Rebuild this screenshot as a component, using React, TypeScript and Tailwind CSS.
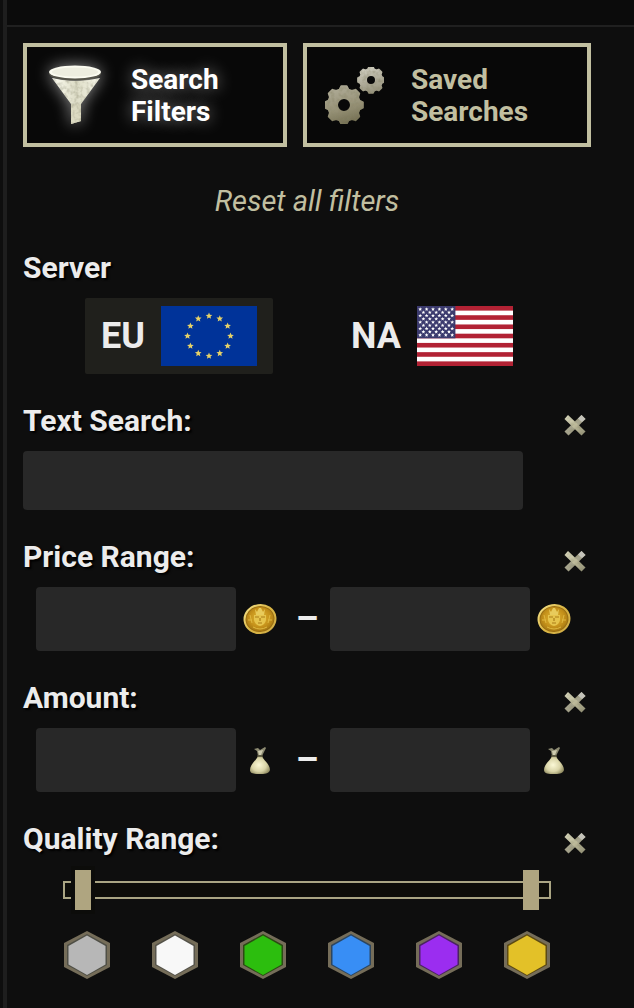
import { useState } from "react"
import type { ReactNode } from "react"

interface SectionProps {
  title: string
  htmlFor?: string
  onClear?: () => void
  children: ReactNode
}

interface RangeRowProps {
  name: string
  min: string
  max: string
  onMin: (value: string) => void
  onMax: (value: string) => void
  icon: ReactNode
}

const qualities = [
  { name: "Poor", color: "#b7b7b7", shade: "#4f4f46" },
  { name: "Common", color: "#f8f8f8", shade: "#55534a" },
  { name: "Uncommon", color: "#2cbe0e", shade: "#2c4a14" },
  { name: "Rare", color: "#388ef5", shade: "#2c4660" },
  { name: "Epic", color: "#9b2df0", shade: "#4a2460" },
  { name: "Legendary", color: "#e3c128", shade: "#5c4a14" },
]

const polar = (cx: number, cy: number, r: number, deg: number) => {
  const a = ((deg - 90) * Math.PI) / 180
  return `${(cx + r * Math.cos(a)).toFixed(2)} ${(cy + r * Math.sin(a)).toFixed(2)}`
}

const gearPath = (cx: number, cy: number, outer: number, inner: number, hole: number) => {
  const points: string[] = []
  for (let i = 0; i < 8; i++) {
    const a = i * 45
    points.push(polar(cx, cy, inner, a - 16), polar(cx, cy, outer, a - 8))
    points.push(polar(cx, cy, outer, a + 8), polar(cx, cy, inner, a + 16))
  }
  return `M${points.join("L")}ZM${cx - hole} ${cy}a${hole} ${hole} 0 1 0 ${hole * 2} 0a${hole} ${hole} 0 1 0 ${-hole * 2} 0Z`
}

const starPoints = (cx: number, cy: number, r: number) =>
  Array.from({ length: 10 }, (_, i) => polar(cx, cy, i % 2 ? r * 0.45 : r, i * 36)).join(" ")

// shared gradients and the worn stone surface used by the icons
const IconDefs = () => (
  <svg className="absolute h-0 w-0" aria-hidden="true">
    <defs>
      <linearGradient id="stone" x1="0" y1="0" x2="1" y2="1">
        <stop offset="0" stopColor="#dddcc2" />
        <stop offset="0.5" stopColor="#bdba9a" />
        <stop offset="1" stopColor="#8d8b72" />
      </linearGradient>
      <linearGradient id="gear" x1="0.3" y1="0" x2="0.6" y2="1">
        <stop offset="0" stopColor="#b0ac98" />
        <stop offset="0.6" stopColor="#969176" />
        <stop offset="1" stopColor="#736e52" />
      </linearGradient>
      <linearGradient id="gear-light" x1="0.3" y1="0" x2="0.6" y2="1">
        <stop offset="0" stopColor="#cfcdbf" />
        <stop offset="1" stopColor="#96927c" />
      </linearGradient>
      <linearGradient id="cone" x1="0" y1="0" x2="1" y2="0">
        <stop offset="0" stopColor="#fffff4" />
        <stop offset="0.5" stopColor="#dddcc6" />
        <stop offset="1" stopColor="#f8f8ea" />
      </linearGradient>
      <radialGradient id="coin" cx="0.5" cy="0.45" r="0.55">
        <stop offset="0" stopColor="#e2b834" />
        <stop offset="0.7" stopColor="#c4901a" />
        <stop offset="1" stopColor="#a87a14" />
      </radialGradient>
      <linearGradient id="rim" x1="0" y1="0" x2="1" y2="1">
        <stop offset="0" stopColor="#f7e690" />
        <stop offset="0.5" stopColor="#dab644" />
        <stop offset="1" stopColor="#d0ac48" />
      </linearGradient>
      <radialGradient id="sack" cx="0.45" cy="0.5" r="0.6">
        <stop offset="0" stopColor="#fbf8d6" />
        <stop offset="0.6" stopColor="#dad5a8" />
        <stop offset="1" stopColor="#8f8a60" />
      </radialGradient>
      <filter id="worn" x="0" y="0" width="1" height="1">
        <feTurbulence type="fractalNoise" baseFrequency="0.25" numOctaves="2" seed="4" />
        <feColorMatrix values="0 0 0 0 0.25  0 0 0 0 0.24  0 0 0 0 0.14  1.2 0 0 0 -0.5" />
        <feComposite in2="SourceAlpha" operator="in" result="spots" />
        <feMerge>
          <feMergeNode in="SourceGraphic" />
          <feMergeNode in="spots" />
        </feMerge>
      </filter>
    </defs>
  </svg>
)

const FunnelIcon = () => (
  <svg viewBox="0 0 64 64" className="h-16 w-16 shrink-0 drop-shadow-[0_0_8px_rgba(255,255,255,0.55)]" aria-hidden="true">
    <g filter="url(#worn)">
      <path d="M9 15Q32 21 57 15L38 41V58L28 61V41Z" fill="url(#cone)" />
      <path d="M28 41H38V58L28 61Z" fill="#dcdac2" />
    </g>
    <ellipse cx="32" cy="10.500" rx="26" ry="7" fill="#55544a" />
    <ellipse cx="32" cy="9" rx="26" ry="6.500" fill="#fbfbf0" />
    <ellipse cx="32" cy="9" rx="23" ry="4.500" fill="#eeeee0" />
  </svg>
)

const GearsIcon = () => (
  <svg viewBox="0 0 64 64" className="h-16 w-16 shrink-0" aria-hidden="true">
    <g filter="url(#worn)" fillRule="evenodd" strokeWidth="2" strokeLinejoin="round">
      <path d={gearPath(21, 42, 19, 16, 7)} fill="url(#gear)" stroke="url(#gear)" />
      <path d={gearPath(48, 17, 13, 11, 5)} fill="url(#gear-light)" stroke="url(#gear-light)" />
    </g>
  </svg>
)

const CrossIcon = () => (
  <svg viewBox="0 0 24 24" className="h-6 w-6" aria-hidden="true">
    <g filter="url(#worn)">
      <path d="M18.500 2L22.500 6L5.500 22.500L1.500 18.500Z" fill="#a5a38c" />
      <path d="M5 2L22.500 18.500L18.500 22.500L1.500 6Z" fill="url(#stone)" />
    </g>
    <path d="M18.500 2L22.500 6L19 9L15 5.500Z" fill="#c4c3ba" />
  </svg>
)

const CoinIcon = () => (
  <svg viewBox="0 0 34 32" className="h-8 w-9" aria-hidden="true">
    <g transform="rotate(-8 17 16)">
      <ellipse cx="17" cy="16" rx="16.500" ry="15" fill="url(#rim)" />
      <ellipse cx="17" cy="16" rx="14.500" ry="13" fill="#9a6e12" />
      <ellipse cx="17" cy="16" rx="13.500" ry="12" fill="url(#coin)" />
    </g>
    <path d="M12 6L13 12H21L22 6L20 9L18 5H16L14 9Z" fill="#e8cb5c" />
    <path d="M11 12H23V17Q22 22 17 23Q12 22 11 17Z" fill="#e6c44c" />
    <path d="M12 14H16M18 14H22M15 20H19M17 15V18" stroke="#a97c18" strokeWidth="1.200" />
    <path d="M7 12L9 20M27 12L25 20M5 17H9M25 17H29M10 24Q17 28 24 24" stroke="#dfb840" strokeWidth="1" fill="none" />
  </svg>
)

const SackIcon = () => (
  <svg viewBox="0 0 32 32" className="h-8 w-8" aria-hidden="true">
    <path d="M10 5L14 4L16 6L21 3L22 4L18 12H14L13 7Z" fill="#8d8b72" />
    <path d="M14 7L15 11H17L19 6" fill="#cfccb0" />
    <path d="M14 12H18C20 17 26 20 26 26C25 30 20 30 16 30C11 30 6 30 6 26C6 20 12 17 14 12Z" fill="url(#sack)" />
    <path d="M13 12H19" stroke="#4d4a34" strokeWidth="1.500" />
  </svg>
)

const EuFlag = () => (
  <svg viewBox="0 0 96 60" className="h-[60px] w-24" aria-hidden="true">
    <rect width="96" height="60" fill="#003399" />
    {Array.from({ length: 12 }, (_, i) => {
      const a = (i * Math.PI) / 6
      return <polygon key={i} points={starPoints(48 + 21.5 * Math.sin(a), 30 - 20 * Math.cos(a), 3.5)} fill="#e6d268" />
    })}
  </svg>
)

const UsFlag = () => (
  <svg viewBox="0 0 96 60" className="h-[60px] w-24" aria-hidden="true">
    <rect width="96" height="60" fill="#fff" />
    {Array.from({ length: 7 }, (_, i) => (
      <rect key={i} y={(i * 120) / 13} width="96" height={60 / 13} fill="#b22234" />
    ))}
    <rect width="38.400" height="32.300" fill="#3c3b6e" />
    {Array.from({ length: 9 }, (_, row) =>
      Array.from({ length: row % 2 ? 5 : 6 }, (_, col) => (
        <polygon
          key={`${row}-${col}`}
          points={starPoints((row % 2 ? 6.4 : 3.2) + col * 6.4, 3.23 + row * 3.23, 2)}
          fill="#fff"
        />
      ))
    )}
  </svg>
)

const Section = ({ title, htmlFor, onClear, children }: SectionProps) => (
  <section className="mb-[31px]">
    <div className="mb-3.5 flex items-end justify-between">
      <h2 className="text-[30px] leading-8 font-bold [text-shadow:2px_2px_2px_#000]">
        {htmlFor ? <label htmlFor={htmlFor}>{title}</label> : title}
      </h2>
      {onClear && (
        <button
          type="button"
          onClick={onClear}
          aria-label={`Clear ${title}`}
          className="flex w-8 cursor-pointer justify-center hover:brightness-125"
        >
          <CrossIcon />
        </button>
      )}
    </div>
    {children}
  </section>
)

const RangeRow = ({ name, min, max, onMin, onMax, icon }: RangeRowProps) => (
  <div className="flex items-center justify-center">
    <input
      aria-label={`${name} from`}
      value={min}
      onChange={e => onMin(e.target.value)}
      className="h-16 w-full max-w-[200px] min-w-0 rounded bg-[#282828] px-4 text-[28px] outline-none"
    />
    <span className="flex w-12 shrink-0 justify-center">{icon}</span>
    <span className="w-[46px] shrink-0 text-center text-4xl font-bold">–</span>
    <input
      aria-label={`${name} to`}
      value={max}
      onChange={e => onMax(e.target.value)}
      className="h-16 w-full max-w-[200px] min-w-0 rounded bg-[#282828] px-4 text-[28px] outline-none"
    />
    <span className="flex w-12 shrink-0 justify-center">{icon}</span>
  </div>
)

const tabClass =
  "flex h-[104px] cursor-pointer items-center gap-6 border-4 border-[#c1bfa0] bg-[#080808] pl-4 text-left text-[28px] leading-8 font-bold"

const serverClass = "flex cursor-pointer items-center gap-4 rounded-xs px-4 py-2 text-4xl font-bold"

const thumbClass =
  "pointer-events-none col-start-1 row-start-1 mx-3 h-10 appearance-none bg-transparent outline-none [&::-webkit-slider-thumb]:pointer-events-auto [&::-webkit-slider-thumb]:h-10 [&::-webkit-slider-thumb]:w-4 [&::-webkit-slider-thumb]:cursor-pointer [&::-webkit-slider-thumb]:appearance-none [&::-webkit-slider-thumb]:bg-[#afa580]"

export default function App() {
  const [tab, setTab] = useState("filters")
  const [server, setServer] = useState("EU")
  const [text, setText] = useState("")
  const [price, setPrice] = useState({ min: "", max: "" })
  const [amount, setAmount] = useState({ min: "", max: "" })
  const [quality, setQuality] = useState({ min: 0, max: 5 })

  const resetAll = () => {
    setText("")
    setPrice({ min: "", max: "" })
    setAmount({ min: "", max: "" })
    setQuality({ min: 0, max: 5 })
  }

  return (
    <div className="min-h-screen bg-[#0e0e0e] pl-[3px] font-[Roboto,sans-serif] text-[#ececec]">
      <IconDefs />
      <div className="min-h-screen border-l-4 border-[#1e1e1e]">
        <header className="h-[27px] border-b-2 border-[#202020] bg-[#0b0b0b]" />
        <main className="pt-4 pr-[43px] pl-4">
          <nav className="grid grid-cols-[264fr_288fr] gap-4">
            <button
              type="button"
              onClick={() => setTab("filters")}
              className={`${tabClass} ${tab === "filters" ? "text-white [text-shadow:0_0_16px_rgba(255,255,255,0.5)]" : "text-[#c1bfa0]"}`}
            >
              <FunnelIcon />
              <span className="pt-0.5">Search<br />Filters</span>
            </button>
            <button
              type="button"
              onClick={() => setTab("saved")}
              className={`${tabClass} ${tab === "saved" ? "text-white [text-shadow:0_0_16px_rgba(255,255,255,0.5)]" : "text-[#c1bfa0]"}`}
            >
              <GearsIcon />
              <span className="pt-0.5">Saved<br />Searches</span>
            </button>
          </nav>

          <div className="mt-9 mb-[33px] flex justify-center">
            <button type="button" onClick={resetAll} className="cursor-pointer text-[29px] leading-9 text-[#c1bfa0] italic hover:text-white">
              Reset all filters
            </button>
          </div>

          <Section title="Server">
            <div className="flex justify-evenly">
              <button
                type="button"
                onClick={() => setServer("EU")}
                className={`${serverClass} ${server === "EU" ? "bg-[#20201c]" : ""}`}
              >
                EU <EuFlag />
              </button>
              <button
                type="button"
                onClick={() => setServer("NA")}
                className={`${serverClass} ${server === "NA" ? "bg-[#20201c]" : ""}`}
              >
                NA <UsFlag />
              </button>
            </div>
          </Section>

          <Section title="Text Search:" htmlFor="text-search" onClear={() => setText("")}>
            <input
              id="text-search"
              value={text}
              onChange={e => setText(e.target.value)}
              className="block h-[59px] w-full max-w-[500px] rounded bg-[#282828] px-4 text-[28px] outline-none"
            />
          </Section>

          <Section title="Price Range:" onClear={() => setPrice({ min: "", max: "" })}>
            <RangeRow
              name="Price"
              min={price.min}
              max={price.max}
              onMin={min => setPrice({ ...price, min })}
              onMax={max => setPrice({ ...price, max })}
              icon={<CoinIcon />}
            />
          </Section>

          <Section title="Amount:" onClear={() => setAmount({ min: "", max: "" })}>
            <RangeRow
              name="Amount"
              min={amount.min}
              max={amount.max}
              onMin={min => setAmount({ ...amount, min })}
              onMax={max => setAmount({ ...amount, max })}
              icon={<SackIcon />}
            />
          </Section>

          <Section title="Quality Range:" onClear={() => setQuality({ min: 0, max: 5 })}>
            <div className="mx-10 grid items-center py-px">
              <div className="col-start-1 row-start-1 h-[18px] border-2 border-[#aaa583] bg-[#0d0d09]" />
              <input
                type="range"
                aria-label="Lowest quality"
                min={0}
                max={5}
                value={quality.min}
                onChange={e => setQuality({ ...quality, min: Math.min(Number(e.target.value), quality.max) })}
                className={`${thumbClass} [&::-webkit-slider-thumb]:shadow-[0_0_0_4px_#0c0c0a]`}
              />
              <input
                type="range"
                aria-label="Highest quality"
                min={0}
                max={5}
                value={quality.max}
                onChange={e => setQuality({ ...quality, max: Math.max(Number(e.target.value), quality.min) })}
                className={thumbClass}
              />
            </div>
            <div className="mx-10 mt-5 flex justify-between">
              {qualities.map(q => (
                <svg key={q.name} viewBox="0 0 48 48" className="h-12 w-12" role="img" aria-label={q.name}>
                  <path d="M24 0L47 12V36L24 48L1 36V12Z" fill="#756d59" />
                  <path d="M24 3L44 14V34L24 45L4 34V14Z" fill={q.shade} />
                  <path d="M24 4.500L42.500 15V33.500L24 44L5.500 33.500V15Z" fill={q.color} />
                </svg>
              ))}
            </div>
          </Section>
        </main>
      </div>
    </div>
  )
}
